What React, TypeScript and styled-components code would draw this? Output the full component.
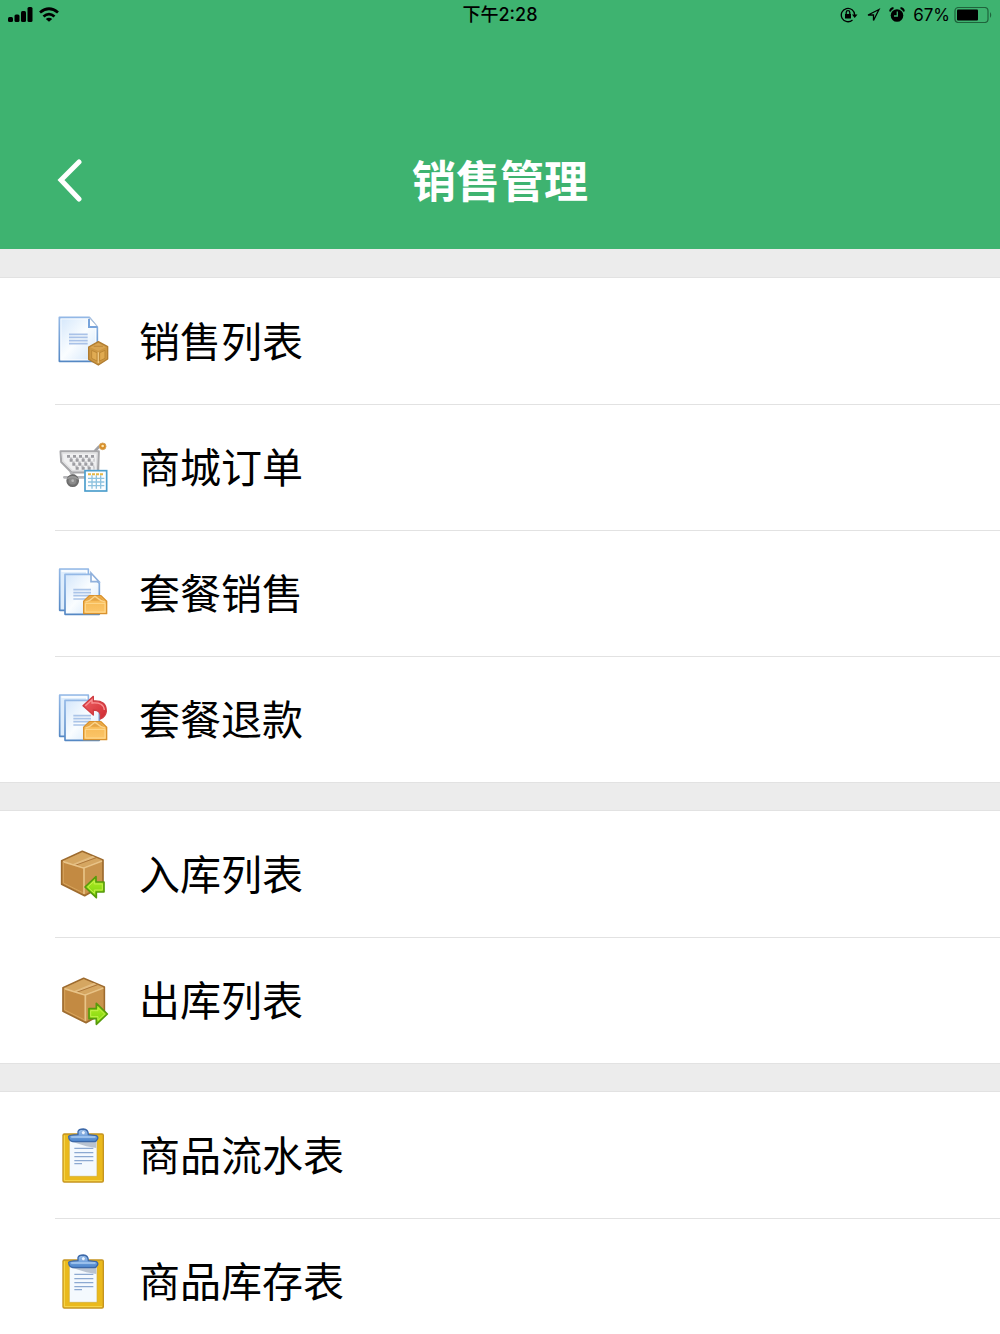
import React from "react";
import styled, { createGlobalStyle } from "styled-components";

const GlobalStyle = createGlobalStyle`
  *, *::before, *::after { box-sizing: border-box; }
  body {
    margin: 0;
    background: #fff;
    color: #000;
    font-family: "Liberation Sans", "Noto Sans CJK SC", sans-serif;
  }
`;

const Screen = styled.div`
  display: flex;
  flex-direction: column;
  height: 100vh;
  overflow: hidden;
`;

const Header = styled.header`
  flex: none;
  background: #3eb370;
`;

const StatusBar = styled.div`
  display: grid;
  grid-template-columns: 1fr auto 1fr;
  align-items: center;
  height: 30px;
  padding: 0 8px;
  font-family: Inter, "Noto Sans CJK SC", sans-serif;
  font-size: 17px;
  line-height: 30px;
`;

const StatusGroup = styled.div<{ $end?: boolean }>`
  display: flex;
  align-items: center;
  justify-content: ${(p) => (p.$end ? "flex-end" : "flex-start")};
  gap: ${(p) => (p.$end ? "4px" : "6px")};
`;

const StatusIcons = styled.div`
  display: flex;
  align-items: center;
  gap: 8px;
`;

const Time = styled.time`
  font-size: 18px;
  font-weight: 500;
`;

const NavBar = styled.div`
  display: grid;
  grid-template-columns: 1fr auto 1fr;
  align-items: center;
  height: 219px;
  padding: 86px 55px 0;
`;

const BackButton = styled.button`
  display: flex;
  justify-self: start;
  padding: 0;
  border: 0;
  background: none;
  cursor: pointer;
`;

const Title = styled.h1`
  margin: 0;
  color: #fff;
  font-size: 44px;
  font-weight: 700;
  line-height: 64px;
`;

const Content = styled.main`
  flex: 1;
  min-height: 0;
  overflow-y: auto;
  scrollbar-width: none;
  background: #ececec;
`;

const Group = styled.ul`
  margin: 29px 0 0;
  padding: 0 0 0 55px;
  list-style: none;
  background: #fff;
  box-shadow: 0 0 0 1px #e2e2e2;
`;

const Item = styled.li`
  & + & {
    box-shadow: inset 0 1px 0 #e2e2e2;
  }
`;

const RowLink = styled.a`
  display: flex;
  align-items: center;
  gap: 28px;
  height: 126px;
  color: inherit;
  text-decoration: none;
`;

const Label = styled.span`
  padding-top: 4px;
  font-size: 41px;
  line-height: 60px;
`;

const RowIcon = styled.svg`
  flex: none;
  width: 56px;
  height: 56px;
`;

const Gradients = () => (
  <svg width="0" height="0" style={{ position: "absolute" }} aria-hidden="true">
    <defs>
      <linearGradient id="paper" x1="0" y1="0" x2="1" y2="1">
        <stop offset="0" stopColor="#d3e6fb" />
        <stop offset=".5" stopColor="#fafdff" />
        <stop offset="1" stopColor="#cfe4fa" />
      </linearGradient>
      <linearGradient id="paperEdge" x1="0" y1="0" x2="0" y2="1">
        <stop offset="0" stopColor="#93b8e6" />
        <stop offset="1" stopColor="#5588c4" />
      </linearGradient>
      <linearGradient id="orange" x1="0" y1="0" x2="0" y2="1">
        <stop offset="0" stopColor="#f5b650" />
        <stop offset="1" stopColor="#fcc669" />
      </linearGradient>
      <linearGradient id="green" x1="0" y1="0" x2="0" y2="1">
        <stop offset="0" stopColor="#b5ec25" />
        <stop offset="1" stopColor="#79d40c" />
      </linearGradient>
      <linearGradient id="clip" x1="0" y1="0" x2="0" y2="1">
        <stop offset="0" stopColor="#a5c9f2" />
        <stop offset="1" stopColor="#4982ca" />
      </linearGradient>
      <linearGradient id="red" x1="0" y1="0" x2="1" y2="1">
        <stop offset="0" stopColor="#f06466" />
        <stop offset="1" stopColor="#cf2830" />
      </linearGradient>
    </defs>
  </svg>
);

const SaleListIcon = () => (
  <RowIcon viewBox="30 24 168 168" aria-hidden="true">
    <path d="M43 37H133L157 66V169H43Z" fill="url(#paper)" stroke="url(#paperEdge)" strokeWidth="5" strokeLinejoin="round" />
    <path d="M48 42H129V67H152V164H48Z" fill="none" stroke="#fff" strokeOpacity=".7" strokeWidth="3" />
    <path d="M133 38L157 65H133Z" fill="#fff" stroke="#b8c5d6" strokeWidth="3" />
    <path d="M132 42V66H157" fill="none" stroke="#78a4dc" strokeWidth="6" />
    <path d="M72 88H128M72 97H128M72 107H128M72 116H128" stroke="#a9c2e8" strokeWidth="5" />
    <path d="M160 110L188 125V162L160 180L131 163V126Z" fill="#cd9742" stroke="#b07c30" strokeWidth="4" strokeLinejoin="round" />
    <path d="M160 114L183 127L160 138L136 127Z" fill="#d9a552" />
    <path d="M140 136L156 143V168L140 160ZM164 143L180 136V160L164 168Z" fill="#e0ab52" stroke="#bc8735" strokeWidth="3" />
    <path d="M160 142V174" stroke="#edc782" strokeWidth="4" />
    <path d="M146 124H174" fill="none" stroke="#c28e40" strokeWidth="4" />
  </RowIcon>
);

const CartIcon = () => (
  <RowIcon viewBox="30 27 168 168" aria-hidden="true">
    <path d="M150 63L162 50L172 48" fill="none" stroke="#a1a1a5" strokeWidth="8" strokeLinecap="round" strokeLinejoin="round" />
    <path d="M47 64H161L159 127H80L49 96Z" fill="#f0f0f1" stroke="#a7a7aa" strokeWidth="7" strokeLinejoin="round" />
    <path d="M51 69H156L154 122H82L54 94Z" fill="none" stroke="#dedee0" strokeWidth="4" />
    <path d="M66 79H148M74 91H148M82 103H148M92 115H148" fill="none" stroke="#9c9ca1" strokeWidth="8" strokeDasharray="9 9" />
    <path d="M75 85H148M82 97H148M91 109H148" fill="none" stroke="#b8b8bc" strokeWidth="5" strokeDasharray="7 11" />
    <path d="M58 142H123M78 128L92 140" stroke="#b5b5b8" strokeWidth="8" strokeLinecap="round" />
    <circle cx="83" cy="152" r="17" fill="#777" stroke="#696969" strokeWidth="4" />
    <circle cx="83" cy="152" r="11" fill="#8c8c8c" />
    <circle cx="83" cy="152" r="4" fill="#b8b8b8" />
    <path d="M67 146Q83 134 99 147" fill="none" stroke="#9b9b9b" strokeWidth="4" />
    <circle cx="173" cy="49" r="10" fill="#d98c24" stroke="#d5a45c" strokeWidth="3" />
    <circle cx="173" cy="48" r="4" fill="#ffe6aa" />
    <rect x="120" y="122" width="65" height="61" fill="#fafdff" stroke="#4b9dcc" strokeWidth="5" />
    <path d="M129 145H178M129 156H178M129 167H178M141 136V176M154 136V176M167 136V176" stroke="#8ec2df" strokeWidth="4" />
    <path d="M129 133H176" stroke="#e7b643" strokeWidth="6" strokeDasharray="9 3" />
  </RowIcon>
);

const StackedPages = ({ folded = false }: { folded?: boolean }) => (
  <>
    <path d="M44 39H130V163H44Z" fill="#deedfc" stroke="url(#paperEdge)" strokeWidth="5" strokeLinejoin="round" />
    <path d="M49 45H125V55" fill="none" stroke="#fff" strokeWidth="4" />
    <path d="M60 55H139L163 82V175H60Z" fill="url(#paper)" stroke="url(#paperEdge)" strokeWidth="5" strokeLinejoin="round" />
    {folded && <path d="M138 51L162 77H138Z" fill="#fff" stroke="#8fb0dc" strokeWidth="5" />}
    <path d="M85 101H138M85 110H138M85 119H138M85 129H130" stroke="#aac4e8" strokeWidth="5" />
  </>
);

const Carton = () => (
  <>
    <path d="M133 119H168L185 136V173H116V136Z" fill="url(#orange)" stroke="#d9922e" strokeWidth="4" strokeLinejoin="round" />
    <path d="M135 122H166L178 134H122Z" fill="#e5a544" />
    <path d="M122 138L134 133L150 121L167 133L180 138" fill="none" stroke="#fbd48c" strokeWidth="4" />
    <path d="M121 142H180V168H121Z" fill="none" stroke="#ffda91" strokeWidth="3" />
  </>
);

const PackageSaleIcon = () => (
  <RowIcon viewBox="30 27 168 168" aria-hidden="true">
    <StackedPages folded />
    <Carton />
  </RowIcon>
);

const PackageRefundIcon = () => (
  <RowIcon viewBox="30 27 168 168" aria-hidden="true">
    <StackedPages />
    <path d="M114 71L145 43V57Q184 54 184 88Q182 104 166 111Q171 84 145 84V99Z" fill="url(#red)" stroke="#cf3c42" strokeWidth="4" strokeLinejoin="round" />
    <path d="M121 71L141 53V63Q176 60 178 84" fill="none" stroke="#fa9294" strokeWidth="4" />
    <Carton />
  </RowIcon>
);

const BoxShape = () => (
  <>
    <path d="M112 40L174 66V142L119 173L50 139V68Z" fill="#c58d44" stroke="#9d6b2f" strokeWidth="5" strokeLinejoin="round" />
    <path d="M54 70L113 91V167L54 136Z" fill="#c38a42" />
    <path d="M119 91L171 70V139L119 168Z" fill="#c9944e" />
    <path d="M112 43L171 67L117 87L54 69Z" fill="#d5a661" />
    <path d="M82 79L142 54L151 58L92 82Z" fill="#e3bc80" />
    <path d="M88 83L154 59" stroke="#ad773a" strokeWidth="3" />
    <path d="M54 71L116 90L171 69M117 90V168" fill="none" stroke="#e8c387" strokeWidth="5" strokeLinejoin="round" />
    <path d="M55 73V135L113 164" fill="none" stroke="#d6a35c" strokeWidth="3" />
  </>
);

const StockInIcon = () => (
  <RowIcon viewBox="30 24 168 168" aria-hidden="true">
    <BoxShape />
    <path d="M120 147L153 116V132H177V162H154V179Z" fill="url(#green)" stroke="#579b0b" strokeWidth="5" strokeLinejoin="round" />
    <path d="M128 147L148 129V138H172V156H148V166Z" fill="none" stroke="#c3f04a" strokeWidth="3" />
  </RowIcon>
);

const StockOutIcon = () => (
  <RowIcon viewBox="30 24 168 168" aria-hidden="true">
    <g transform="translate(4 3)">
      <BoxShape />
    </g>
    <path d="M187 150L154 118V134H132V164H154V181Z" fill="url(#green)" stroke="#579b0b" strokeWidth="5" strokeLinejoin="round" />
    <path d="M179 150L159 131V140H137V158H159V169Z" fill="none" stroke="#c3f04a" strokeWidth="3" />
  </RowIcon>
);

const ClipboardIcon = () => (
  <RowIcon viewBox="30 21 168 168" overflow="visible" aria-hidden="true">
    <rect x="54" y="42" width="121" height="144" rx="4" fill="#eab91c" stroke="#c59420" strokeWidth="4" />
    <path d="M58 46V182H171" fill="none" stroke="#f7da53" strokeWidth="3" />
    <path d="M73 54H156V169H73Z" fill="#f4f9fe" stroke="#d2ad3d" strokeWidth="2" />
    <path d="M76 64H154V84L124 79Z" fill="#b9c3d1" />
    <path d="M88 85H145M88 98H145M88 110H145M88 122H145M88 131H111" stroke="#8ca9d1" strokeWidth="4" />
    <path d="M71 49Q73 45 99 44V35Q101 27 115 27Q130 28 130 44L154 47Q161 51 157 58Q154 65 148 65H83Q71 63 71 49Z" fill="url(#clip)" stroke="#3c68a8" strokeWidth="4" strokeLinejoin="round" />
    <circle cx="115" cy="38" r="6" fill="#e9f3ff" stroke="#6e99d0" strokeWidth="2" />
    <path d="M80 51H150" stroke="#a9cbf2" strokeWidth="4" strokeLinecap="round" />
  </RowIcon>
);

const SignalIcon = () => (
  <svg width="25" height="16" viewBox="0 0 25 16" aria-hidden="true">
    <rect x="0" y="10" width="5" height="5" rx="1.5" />
    <rect x="6.5" y="7.5" width="5" height="7.5" rx="1.5" />
    <rect x="13" y="4" width="5" height="11" rx="1.5" />
    <rect x="19.5" y="0" width="5" height="15" rx="1.5" />
  </svg>
);

const WifiIcon = () => (
  <svg width="20" height="16" viewBox="0 0 20 16" fill="none" stroke="#000" strokeWidth="2.8" aria-hidden="true">
    <path d="M1 5.5Q10-2 19 5.5" />
    <path d="M4.500 9.5Q10 4.800 15.5 9.5" />
    <path d="M10 14.8L6.8 12Q10 9.5 13.2 12Z" fill="#000" stroke="none" />
  </svg>
);

const RotationLockIcon = () => (
  <svg width="18" height="16" viewBox="0 0 18 16" fill="none" stroke="#000" strokeWidth="1.3" aria-hidden="true">
    <path d="M14.7 8A6.7 6.7 0 1 0 12.5 13" />
    <path d="M12 7.5H17.5L14.7 11Z" fill="#000" stroke="none" />
    <rect x="5" y="7" width="6" height="4.5" fill="#000" stroke="none" />
    <path d="M6.2 7V5.5A1.8 1.8 0 0 1 9.8 5.5V7" />
  </svg>
);

const LocationIcon = () => (
  <svg width="15" height="16" viewBox="0 0 15 16" fill="none" stroke="#000" strokeWidth="1.3" strokeLinejoin="miter" aria-hidden="true">
    <path d="M13 2.5L2 8H7.5V13.5Z" />
  </svg>
);

const AlarmIcon = () => (
  <svg width="16" height="16" viewBox="0 0 16 16" fill="none" stroke="#000" aria-hidden="true">
    <circle cx="8" cy="8.5" r="6.3" fill="#000" stroke="none" />
    <path d="M1 4.5Q1.5 1.5 4.5 1M15 4.5Q14.5 1.5 11.5 1" strokeWidth="1.8" />
    <path d="M8.3 4.5V9H5" stroke="#3eb370" strokeWidth="1.3" />
  </svg>
);

const BatteryIcon = () => (
  <svg width="38" height="16" viewBox="0 0 38 16" role="img" aria-label="67%">
    <rect x="1" y=".5" width="33" height="15" rx="3.5" fill="none" stroke="#1f643c" strokeWidth="1.2" />
    <rect x="3" y="2.5" width="21" height="11" rx="1" />
    <path d="M36 5Q38.5 8 36 11Z" fill="#1f643c" />
  </svg>
);

const BackIcon = () => (
  <svg width="32" height="48" viewBox="0 0 32 48" fill="none" stroke="#fff" strokeWidth="5" strokeLinecap="round" strokeLinejoin="miter" aria-hidden="true">
    <path d="M24 3L6 21L24 40" />
  </svg>
);

const groups = [
  [
    { label: "销售列表", Icon: SaleListIcon },
    { label: "商城订单", Icon: CartIcon },
    { label: "套餐销售", Icon: PackageSaleIcon },
    { label: "套餐退款", Icon: PackageRefundIcon },
  ],
  [
    { label: "入库列表", Icon: StockInIcon },
    { label: "出库列表", Icon: StockOutIcon },
  ],
  [
    { label: "商品流水表", Icon: ClipboardIcon },
    { label: "商品库存表", Icon: ClipboardIcon },
  ],
];

export default function App() {
  return (
    <Screen lang="zh-CN">
      <GlobalStyle />
      <Gradients />
      <Header>
        <StatusBar>
          <StatusGroup>
            <SignalIcon />
            <WifiIcon />
          </StatusGroup>
          <Time>下午2:28</Time>
          <StatusGroup $end>
            <StatusIcons>
              <RotationLockIcon />
              <LocationIcon />
              <AlarmIcon />
              <span>67%</span>
            </StatusIcons>
            <BatteryIcon />
          </StatusGroup>
        </StatusBar>
        <NavBar>
          <BackButton type="button" aria-label="返回">
            <BackIcon />
          </BackButton>
          <Title>销售管理</Title>
        </NavBar>
      </Header>
      <Content>
        {groups.map((items, index) => (
          <Group key={index}>
            {items.map(({ label, Icon }) => (
              <Item key={label}>
                <RowLink href="#">
                  <Icon />
                  <Label>{label}</Label>
                </RowLink>
              </Item>
            ))}
          </Group>
        ))}
      </Content>
    </Screen>
  );
}
